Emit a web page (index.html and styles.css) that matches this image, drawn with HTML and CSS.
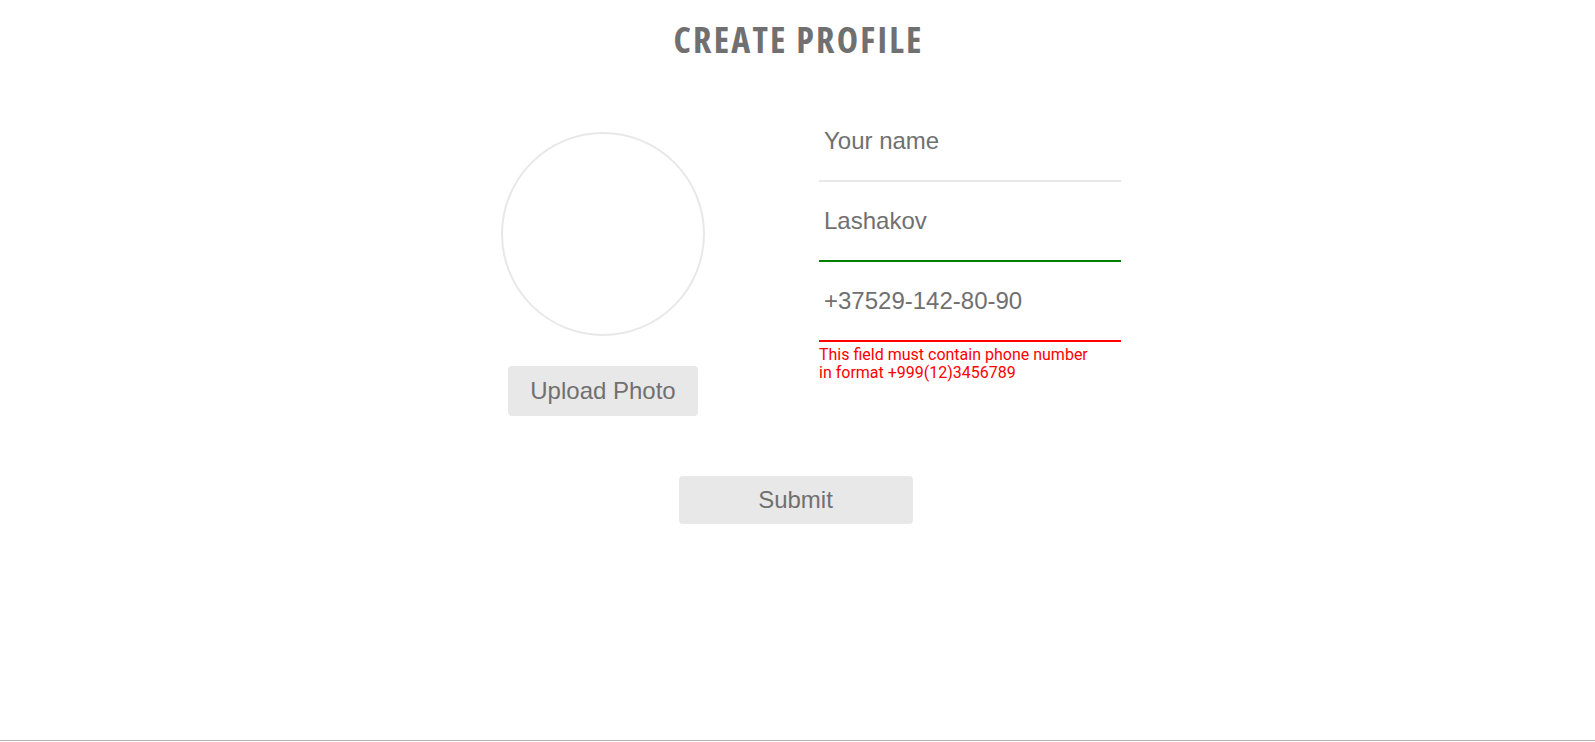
FILE: index.html
```html
<!DOCTYPE html>
<html lang="en">
<head>
<meta charset="utf-8">
<title>Create profile</title>
<link rel="stylesheet" href="styles.css">
</head>
<body>
<main class="page">
  <h1 class="title">CREATE PROFILE</h1>
  <form class="profile" onsubmit="return false">
    <div class="row">
      <div class="photo-col">
        <div class="avatar"></div>
        <button type="button" class="btn upload">Upload Photo</button>
      </div>
      <div class="fields">
        <input class="field" type="text" placeholder="Your name">
        <input class="field valid" type="text" value="Lashakov">
        <input class="field invalid" type="text" value="+37529-142-80-90">
        <p class="error">This field must contain phone number<br>in format +999(12)3456789</p>
      </div>
    </div>
    <button type="submit" class="btn submit">Submit</button>
  </form>
  <footer class="footer"></footer>
</main>
</body>
</html>
```
FILE: styles.css
```css
html, body {
  margin: 0;
  padding: 0;
  background: #ffffff;
}

.page {
  min-height: 100vh;
  box-sizing: border-box;
  display: flex;
  flex-direction: column;
  font-family: "Liberation Sans", Arial, sans-serif;
  color: #707070;
}

.title {
  margin: 19px 0 0;
  padding-left: 2px;
  text-align: center;
  font-family: "Open Sans", sans-serif;
  font-stretch: 75%;
  font-weight: 700;
  font-size: 36px;
  line-height: 42px;
  letter-spacing: 2.2px;
  color: #707070;
}

.profile {
  display: flex;
  flex-direction: column;
  align-items: center;
}

.row {
  display: flex;
  justify-content: center;
  align-items: flex-start;
  gap: 114px;
  margin-top: 41px;
  padding-left: 27px;
}

.photo-col {
  width: 204px;
  margin-top: 30px;
  display: flex;
  flex-direction: column;
  align-items: center;
}

.avatar {
  width: 200px;
  height: 200px;
  border: 2px solid #e8e8e8;
  border-radius: 50%;
}

.btn {
  border: none;
  border-radius: 4px;
  background: #e8e8e8;
  color: #707070;
  font-family: "Liberation Sans", Arial, sans-serif;
  font-size: 24px;
  padding: 0;
  cursor: pointer;
}

.upload {
  width: 190px;
  height: 50px;
  margin-top: 30px;
}

.fields {
  width: 302px;
  display: flex;
  flex-direction: column;
}

.field {
  display: block;
  width: 302px;
  height: 80px;
  box-sizing: border-box;
  margin: 0;
  padding: 0 5px;
  border: none;
  border-bottom: 2px solid #e8e8e8;
  background: transparent;
  outline: none;
  font-family: "Liberation Sans", Arial, sans-serif;
  font-size: 24px;
  color: #707070;
}

.field::placeholder {
  color: #707070;
  opacity: 1;
}

.field.valid {
  border-bottom-color: #008000;
}

.field.invalid {
  border-bottom-color: #ff0000;
}

.error {
  margin: 4px 0 0;
  font-family: Roboto, "Liberation Sans", sans-serif;
  font-size: 16px;
  line-height: 18px;
  color: #ff0000;
}

.submit {
  width: 234px;
  height: 48px;
  margin: 60px 4px 0 0;
}

.footer {
  margin-top: auto;
  height: 1px;
  border-top: 1px solid #b3b3b3;
}
```
